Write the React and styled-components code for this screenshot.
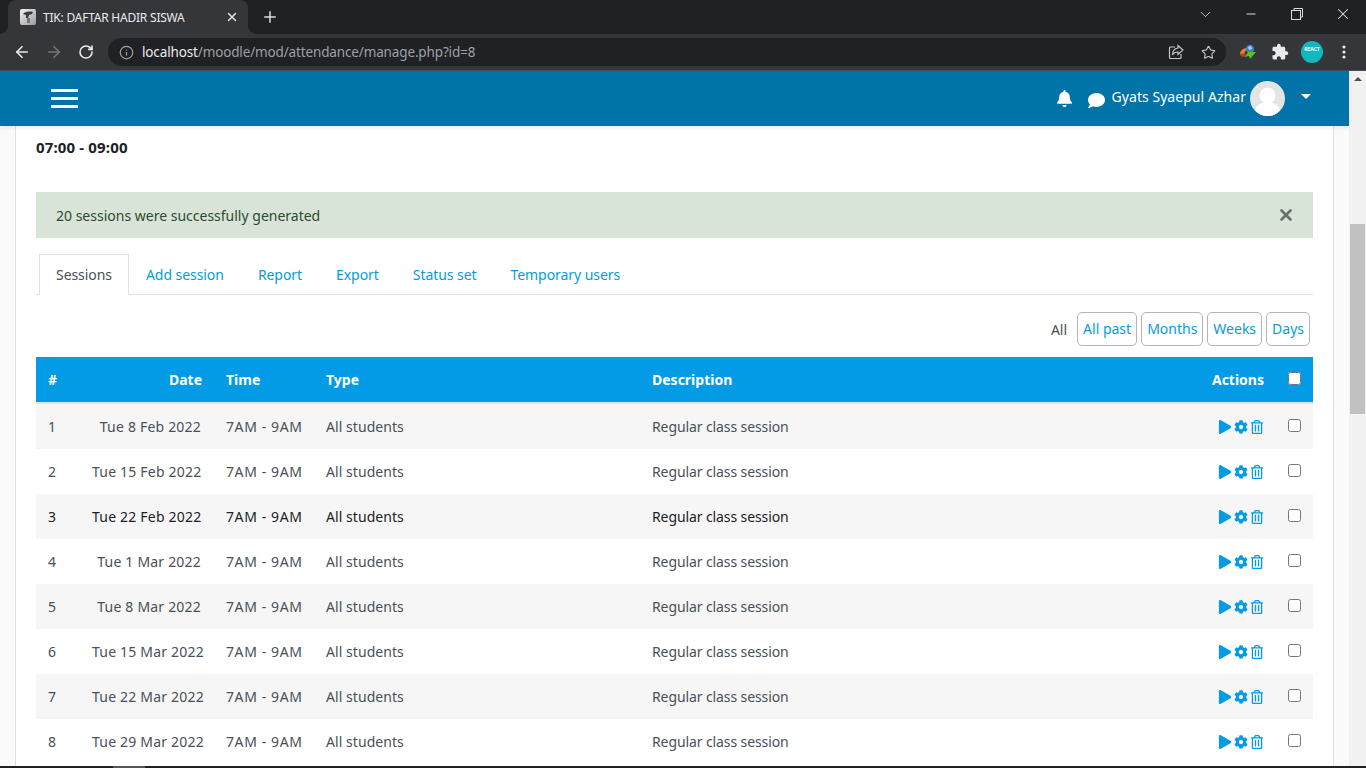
import React from 'react';
import styled, { createGlobalStyle } from 'styled-components';
import { FaBell, FaComment, FaPlay, FaCog, FaRegTrashAlt } from 'react-icons/fa';
import { MdExtension } from 'react-icons/md';
import { ArrowLeft, ArrowRight, RotateCw, Info, Star, X, Plus, ChevronDown, Minus } from 'lucide-react';

const sans = `"Noto Sans", "Open Sans", "Liberation Sans", sans-serif`;

const GlobalStyle = createGlobalStyle`
  html, body { margin: 0; padding: 0; height: 768px; overflow: hidden; background: #fafafa; }
  * { box-sizing: border-box; }
  body { font-family: ${sans}; font-size: 14px; color: #495057; }
`;

const Screen = styled.div`
  width: 1366px;
  height: 768px;
  display: flex;
  flex-direction: column;
  overflow: hidden;
`;

const TabStrip = styled.div`
  height: 34px;
  flex: none;
  background: #202124;
  display: flex;
  align-items: flex-end;
  padding-left: 8px;
`;

const Tab = styled.div`
  position: relative;
  width: 240px;
  height: 34px;
  background: #35363a;
  border-radius: 8px 8px 0 0;
  display: flex;
  align-items: center;
  padding: 0 9px 0 12px;
  color: #e8eaed;
  font-size: 12px;
  letter-spacing: -0.22px;

  &::before,
  &::after {
    content: '';
    position: absolute;
    bottom: 0;
    width: 8px;
    height: 8px;
  }
  &::before {
    left: -8px;
    background: radial-gradient(circle at 0 0, #202124 7.5px, #35363a 8px);
  }
  &::after {
    right: -8px;
    background: radial-gradient(circle at 100% 0, #202124 7.5px, #35363a 8px);
  }
`;

const Favicon = styled.svg`
  width: 16px;
  height: 16px;
  margin-right: 7px;
  flex: none;
`;

const TabTitle = styled.span`
  flex: 1;
  white-space: nowrap;
`;

const NewTab = styled.div`
  width: 32px;
  height: 34px;
  margin-left: 6px;
  display: flex;
  align-items: center;
  justify-content: center;
  color: #dadce0;
`;

const WindowControls = styled.div`
  margin-left: auto;
  height: 34px;
  display: flex;
  align-items: flex-start;
  color: #dadce0;
`;

const WindowButton = styled.div`
  width: 46px;
  height: 28px;
  display: flex;
  align-items: center;
  justify-content: center;
`;

const RestoreIcon = styled.svg`
  width: 12px;
  height: 12px;
`;

const Toolbar = styled.div`
  height: 37px;
  flex: none;
  background: #35363a;
  display: flex;
  align-items: center;
  padding-left: 6px;
  border-bottom: 1px solid #4a4c50;
  color: #e8eaed;
`;

const NavButton = styled.div`
  width: 32px;
  height: 32px;
  display: flex;
  align-items: center;
  justify-content: center;
  color: ${(p) => (p.$off ? '#75777a' : '#e8eaed')};
`;

const Omnibox = styled.div`
  width: 1118px;
  height: 28px;
  margin: 0 6px;
  background: #202124;
  border-radius: 14px;
  display: flex;
  align-items: center;
  padding: 0 2px 0 11px;
  font-size: 13.5px;
  color: #9aa0a6;
`;

const Url = styled.span`
  margin-left: 8px;
  flex: 1;
  white-space: nowrap;
  letter-spacing: -0.14px;
  b { font-weight: 400; color: #e8eaed; }
`;

const OmniIcon = styled.div`
  width: 32px;
  display: flex;
  justify-content: center;
  color: #c4c7c5;
`;

const ExtensionSlot = styled.div`
  width: 32px;
  height: 32px;
  display: flex;
  align-items: center;
  justify-content: center;
  color: #e8eaed;
`;

const ExtAvatar = styled.div`
  width: 22px;
  height: 22px;
  border-radius: 50%;
  background: #14b6c0;
  color: #fff;
  font-size: 5px;
  font-weight: 700;
  display: flex;
  justify-content: center;
  padding-top: 5px;
  line-height: 6px;
`;

const Viewport = styled.div`
  flex: 1;
  min-height: 0;
  display: flex;
`;

const PageColumn = styled.div`
  flex: 1;
  min-width: 0;
  display: flex;
  flex-direction: column;
`;

const Navbar = styled.header`
  height: 55px;
  flex: none;
  background: #0073a8;
  display: flex;
  align-items: center;
  padding: 0 38px 0 51px;
  color: #fff;
  box-shadow: 0 2px 4px rgba(0, 0, 0, 0.08);
  position: relative;
  z-index: 1;
`;

const Burger = styled.div`
  width: 27px;
  height: 19px;
  display: flex;
  flex-direction: column;
  justify-content: space-between;
  span { height: 3px; background: #fff; display: block; }
`;

const UserMenu = styled.div`
  margin-left: auto;
  display: flex;
  align-items: center;
  font-size: 14px;
`;

const NavIcon = styled.div`
  display: flex;
  margin-right: ${(p) => p.$gap}px;
  padding-top: ${(p) => p.$top || 0}px;
`;

const UserName = styled.span`
  margin-top: -4px;
  letter-spacing: 0.05px;
`;

const Avatar = styled.svg`
  width: 35px;
  height: 35px;
  margin-left: 4px;
`;

const Caret = styled.div`
  width: 0;
  height: 0;
  margin-left: 16px;
  margin-top: -5px;
  border-left: 5px solid transparent;
  border-right: 5px solid transparent;
  border-top: 5px solid #fff;
`;

const Card = styled.main`
  flex: 1;
  min-height: 0;
  margin-left: 15px;
  width: 1319px;
  background: #fff;
  border: solid #dee2e6;
  border-width: 0 1px;
  padding: 0 20px;
`;

const SessionTime = styled.div`
  margin-top: 11px;
  height: 20px;
  line-height: 20px;
  font-size: 15px;
  letter-spacing: 0.15px;
  font-weight: 700;
  color: #1d2125;
`;

const Alert = styled.div`
  margin-top: 35px;
  height: 46px;
  background: #d8e4d7;
  color: #2f4a30;
  display: flex;
  align-items: center;
  justify-content: space-between;
  padding: 0 20px;
`;

const Close = styled.div`
  display: flex;
  color: #6c6f6c;
  margin-right: -2px;
`;

const Tabs = styled.nav`
  margin-top: 16px;
  height: 41px;
  display: flex;
  padding-left: 3px;
  border-bottom: 1px solid #dee2e6;
`;

const TabLink = styled.a`
  height: ${(p) => (p.$active ? '41px' : '40px')};
  padding: 0 16px;
  line-height: 40px;
  letter-spacing: -0.06px;
  color: ${(p) => (p.$active ? '#495057' : '#039be5')};
  background: ${(p) => (p.$active ? '#fff' : 'transparent')};
  border: 1px solid ${(p) => (p.$active ? '#dee2e6' : 'transparent')};
  border-bottom: 0;
  white-space: nowrap;
`;

const Filters = styled.div`
  margin-top: 17px;
  height: 34px;
  display: flex;
  justify-content: flex-end;
  align-items: center;
  gap: 4px;
  padding-right: 3px;
`;

const FilterCurrent = styled.span`
  margin-right: 6px;
`;

const FilterButton = styled.a`
  height: 34px;
  line-height: 32px;
  padding: 0 5px;
  border: 1px solid #b5b5b5;
  border-radius: 5px;
  color: #039be5;
`;

const Table = styled.table`
  margin-top: 11px;
  width: 100%;
  table-layout: fixed;
  border-collapse: collapse;
`;

const Head = styled.th`
  height: 46px;
  padding: 0 12px;
  background: #039be5;
  color: #fff;
  font-weight: 700;
  text-align: ${(p) => p.$align || 'left'};
  border-bottom: 2px solid #dee2e6;
`;

const Row = styled.tr`
  background: ${(p) => (p.$odd ? '#f6f6f6' : '#fff')};
  &:first-child td { height: 46px; }
`;

const Cell = styled.td`
  height: 45px;
  padding: 0 12px;
  text-align: left;
  white-space: nowrap;
  letter-spacing: ${(p) => p.$track || 0}px;
  color: ${(p) => (p.$dark ? '#1d2125' : '#495057')};
`;

const DateCell = styled(Cell)`
  padding-right: 13px;
  text-align: right;
`;

const ActionIcons = styled.div`
  display: flex;
  justify-content: flex-end;
  align-items: center;
  gap: 2px;
  color: #039be5;
`;

const Check = styled.input.attrs({ type: 'checkbox' })`
  width: 13px;
  height: 13px;
  margin: 0 0 3px;
  display: block;
`;

const ScrollBar = styled.aside`
  width: 17px;
  flex: none;
  background: #f1f1f1;
  display: flex;
  flex-direction: column;
  align-items: center;
  padding-top: 6px;
`;

const ScrollUp = styled.div`
  width: 0;
  height: 0;
  border-left: 4px solid transparent;
  border-right: 4px solid transparent;
  border-bottom: 4px solid #505050;
`;

const ScrollThumb = styled.div`
  width: 15px;
  height: 190px;
  margin-top: 143px;
  background: #c1c1c1;
`;

const Taskbar = styled.div`
  height: 2px;
  flex: none;
  background: #202124;
  padding-left: 113px;
  span { display: block; width: 32px; height: 2px; background: #55575a; }
`;

const rows = [
  'Tue 8 Feb 2022',
  'Tue 15 Feb 2022',
  'Tue 22 Feb 2022',
  'Tue 1 Mar 2022',
  'Tue 8 Mar 2022',
  'Tue 15 Mar 2022',
  'Tue 22 Mar 2022',
  'Tue 29 Mar 2022',
];

export default function App() {
  return (
    <Screen>
      <GlobalStyle />
      <TabStrip>
        <Tab>
          <Favicon viewBox="0 0 16 16">
            <defs>
              <linearGradient id="fav" x1="0" y1="0" x2="1" y2="1">
                <stop offset="0" stopColor="#f2f2f2" />
                <stop offset="1" stopColor="#9a9a9a" />
              </linearGradient>
            </defs>
            <rect width="16" height="16" rx="2" fill="url(#fav)" />
            <path d="M3 5c1-2 6-3 10-2l-1 2-3 1-1 3H6V6z" fill="#3a3a3a" />
            <path d="M7 9h3v5H7z" fill="#777" />
          </Favicon>
          <TabTitle>TIK: DAFTAR HADIR SISWA</TabTitle>
          <X size={14} strokeWidth={2.4} />
        </Tab>
        <NewTab><Plus size={18} strokeWidth={2} /></NewTab>
        <WindowControls>
          <WindowButton><ChevronDown size={17} strokeWidth={1.2} /></WindowButton>
          <WindowButton><Minus size={14} strokeWidth={1.8} /></WindowButton>
          <WindowButton>
            <RestoreIcon viewBox="0 0 12 12" fill="none" stroke="currentColor">
              <rect x="0.5" y="2.5" width="9" height="9" />
              <path d="M3 2.5V0.5h8.5V9H9.5" />
            </RestoreIcon>
          </WindowButton>
          <WindowButton><X size={18} strokeWidth={1.4} /></WindowButton>
        </WindowControls>
      </TabStrip>

      <Toolbar>
        <NavButton><ArrowLeft size={18} strokeWidth={2.2} /></NavButton>
        <NavButton $off><ArrowRight size={18} strokeWidth={2.2} /></NavButton>
        <NavButton><RotateCw size={16} strokeWidth={2.4} /></NavButton>
        <Omnibox>
          <Info size={15} strokeWidth={2} />
          <Url><b>localhost</b>/moodle/mod/attendance/manage.php?id=8</Url>
          <OmniIcon>
            <svg width="16" height="16" viewBox="0 0 16 16" fill="none" stroke="currentColor" strokeWidth="1.2">
              <path d="M7 3H2.500A1 1 0 0 0 1.500 4v9.500a1 1 0 0 0 1 1H12a1 1 0 0 0 1-1V10" />
              <path d="M10 1.500 15 6l-5 4.500V8C7 8 5.500 9 4.500 11c0-4 2-6.500 5.500-7z" />
            </svg>
          </OmniIcon>
          <OmniIcon><Star size={15} strokeWidth={1.8} /></OmniIcon>
        </Omnibox>
        <ExtensionSlot>
          <svg width="18" height="16" viewBox="0 0 18 16">
            <path d="M1 10c0-3 3-6 7-6L6 8c-1 1-1 2 0 3l-3 1z" fill="#e0862a" />
            <path d="M2 12c-1-1-1-2-1-2l5-1 1 2-3 2z" fill="#c9382f" />
            <circle cx="11" cy="5" r="4.200" fill="#3f7fd0" />
            <path d="M9 3l3-1 1 3-3 1z" fill="#a8d8e8" />
            <path d="M17 8l-6 7-1-3-5 1 3-3 1-2z" fill="#5cc21f" />
          </svg>
        </ExtensionSlot>
        <ExtensionSlot><MdExtension size={18} /></ExtensionSlot>
        <ExtensionSlot><ExtAvatar>REACT</ExtAvatar></ExtensionSlot>
        <ExtensionSlot>
          <svg width="4" height="14" viewBox="0 0 4 14" fill="currentColor">
            <circle cx="2" cy="2" r="1.600" />
            <circle cx="2" cy="7" r="1.600" />
            <circle cx="2" cy="12" r="1.600" />
          </svg>
        </ExtensionSlot>
      </Toolbar>

      <Viewport>
        <PageColumn>
          <Navbar>
            <Burger><span /><span /><span /></Burger>
            <UserMenu>
              <NavIcon $gap={15} $top={0}><FaBell size={17} /></NavIcon>
              <NavIcon $gap={7} $top={3}><FaComment size={17} /></NavIcon>
              <UserName>Gyats Syaepul Azhar</UserName>
              <Avatar viewBox="0 0 35 35">
                <defs>
                  <clipPath id="face"><circle cx="17.500" cy="17.500" r="17.500" /></clipPath>
                </defs>
                <circle cx="17.500" cy="17.500" r="17.500" fill="#e4e4e4" />
                <g clipPath="url(#face)" fill="#fff">
                  <circle cx="17.500" cy="14.500" r="8" />
                  <ellipse cx="17.500" cy="31" rx="13" ry="10" />
                </g>
              </Avatar>
              <Caret />
            </UserMenu>
          </Navbar>
          <Card>
            <SessionTime>07:00 - 09:00</SessionTime>
            <Alert>
              <span>20 sessions were successfully generated</span>
              <Close><X size={18} strokeWidth={3.6} /></Close>
            </Alert>
            <Tabs>
              <TabLink $active>Sessions</TabLink>
              <TabLink>Add session</TabLink>
              <TabLink>Report</TabLink>
              <TabLink>Export</TabLink>
              <TabLink>Status set</TabLink>
              <TabLink>Temporary users</TabLink>
            </Tabs>
            <Filters>
              <FilterCurrent>All</FilterCurrent>
              <FilterButton>All past</FilterButton>
              <FilterButton>Months</FilterButton>
              <FilterButton>Weeks</FilterButton>
              <FilterButton>Days</FilterButton>
            </Filters>
            <Table>
              <colgroup>
                <col width="44" />
                <col width="134" />
                <col width="100" />
                <col width="326" />
                <col width="510" />
                <col width="126" />
                <col width="37" />
              </colgroup>
              <thead>
                <tr>
                  <Head>#</Head>
                  <Head $align="right">Date</Head>
                  <Head>Time</Head>
                  <Head>Type</Head>
                  <Head>Description</Head>
                  <Head $align="right">Actions</Head>
                  <Head><Check /></Head>
                </tr>
              </thead>
              <tbody>
                {rows.map((date, i) => (
                  <Row key={date} $odd={i % 2 === 0}>
                    <Cell $dark={i === 2}>{i + 1}</Cell>
                    <DateCell $track={0.2} $dark={i === 2}>{date}</DateCell>
                    <Cell $track={0.6} $dark={i === 2}>7AM - 9AM</Cell>
                    <Cell $track={0.06} $dark={i === 2}>All students</Cell>
                    <Cell $track={-0.1} $dark={i === 2}>Regular class session</Cell>
                    <Cell>
                      <ActionIcons>
                        <FaPlay size={14} />
                        <FaCog size={14} />
                        <FaRegTrashAlt size={14} />
                      </ActionIcons>
                    </Cell>
                    <Cell><Check /></Cell>
                  </Row>
                ))}
              </tbody>
            </Table>
          </Card>
        </PageColumn>
        <ScrollBar>
          <ScrollUp />
          <ScrollThumb />
        </ScrollBar>
      </Viewport>
      <Taskbar><span /></Taskbar>
    </Screen>
  );
}
